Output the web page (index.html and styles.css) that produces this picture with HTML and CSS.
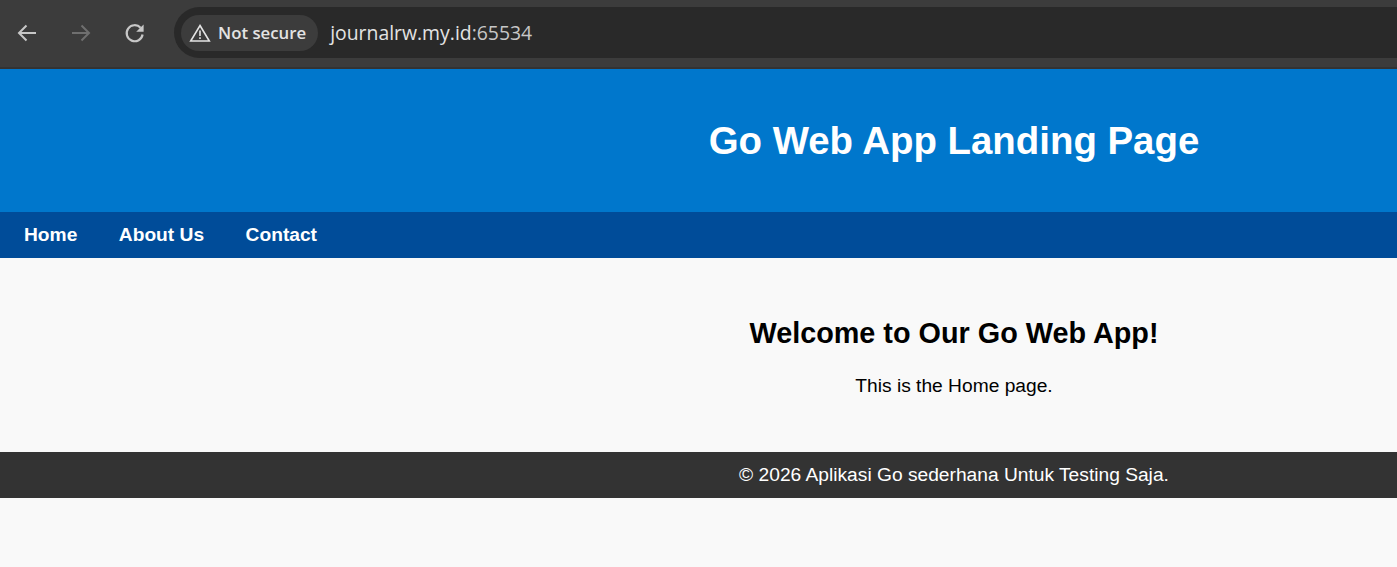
FILE: index.html
```html
<!DOCTYPE html>
<html lang="en">
<head>
<meta charset="utf-8">
<title>Go Web App Landing Page</title>
<link rel="stylesheet" href="styles.css">
</head>
<body>
<div class="browser">
  <div class="nav-buttons">
    <svg class="btn" width="24" height="24" viewBox="0 0 24 24"><path d="M21 12H4M11.5 4.5L4 12L11.5 19.5" fill="none" stroke="#c7c7c7" stroke-width="2"/></svg>
    <svg class="btn" width="24" height="24" viewBox="0 0 24 24"><path d="M3 12H20M12.5 4.5L20 12L12.5 19.5" fill="none" stroke="#6f6f6f" stroke-width="2"/></svg>
    <svg class="btn" width="24" height="24" viewBox="0 0 24 24"><path d="M19.6 13.5A8 8 0 1 1 17.6 6.8" fill="none" stroke="#c7c7c7" stroke-width="2.2"/><path d="M20.6 3.4V10.8H13.2Z" fill="#c7c7c7"/></svg>
  </div>
  <div class="omnibox">
    <div class="chip">
      <svg width="22" height="20" viewBox="0 0 22 20"><path d="M11 2.5L20.3 18H1.7Z" fill="none" stroke="#e3e3e3" stroke-width="1.6"/><path d="M11 7.5V13M11 14.2V16" fill="none" stroke="#e3e3e3" stroke-width="1.6"/></svg>
      <span>Not secure</span>
    </div>
    <div class="url"><span class="host">journalrw.my.id</span>:65534</div>
  </div>
</div>
<header class="hero"><h1>Go Web App Landing Page</h1></header>
<nav class="menu">
  <a href="#">Home</a>
  <a href="#">About Us</a>
  <a href="#">Contact</a>
</nav>
<main class="content">
  <h2>Welcome to Our Go Web App!</h2>
  <p>This is the Home page.</p>
</main>
<footer class="foot">© 2026 Aplikasi Go sederhana Untuk Testing Saja.</footer>
</body>
</html>
```
FILE: styles.css
```css
* { box-sizing: border-box; }
body { margin: 0; background: #f9f9f9; color: #000; font-family: "Liberation Sans", Arial, sans-serif; }
.browser { height: 69px; background: #3c3c3c; display: flex; align-items: flex-start; padding: 7px 0 0 15px; border-bottom: 2px solid #333; }
.nav-buttons { display: flex; gap: 30px; padding-top: 14px; margin-right: 27px; }
.btn { display: block; }
.omnibox { flex: 1; height: 51px; background: #292929; border-radius: 26px 0 0 26px; display: flex; align-items: center; padding-left: 7px; }
.chip { height: 36px; padding: 0 12px 0 8px; border-radius: 18px; background: #3c3c3c; display: flex; align-items: center; gap: 7px; color: #e3e3e3; font: 600 16.8px "Open Sans", sans-serif; }
.url { margin-left: 12px; color: #c7c7c7; font: 400 19.4px "Open Sans", sans-serif; }
.host { color: #e3e3e3; }
.hero { height: 143px; background: #0077cc; color: #fff; display: flex; align-items: center; justify-content: center; padding-left: 511px; }
.hero h1 { margin: 0; font-size: 38.4px; font-weight: 700; }
.menu { height: 46px; background: #004c99; display: flex; align-items: center; gap: 41.5px; padding-left: 24px; }
.menu a { color: #fff; font-weight: 700; font-size: 19.2px; text-decoration: none; }
.content { height: 194px; padding: 59px 0 0 511px; text-align: center; }
.content h2 { margin: 0; font-size: 28.8px; font-weight: 700; }
.content p { margin: 25px 0 0; font-size: 19.2px; }
.foot { height: 46px; background: #333; color: #fff; display: flex; align-items: center; justify-content: center; padding-left: 511px; font-size: 19.2px; }
```
